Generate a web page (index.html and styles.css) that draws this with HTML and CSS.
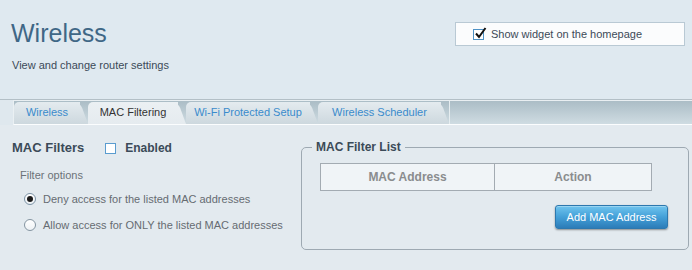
FILE: index.html
```html
<!DOCTYPE html>
<html lang="en">
  <head>
    <meta charset="UTF-8" />
    <meta name="viewport" content="width=device-width, initial-scale=1.0" />
    <title>Wireless</title>
    <link rel="stylesheet" href="styles.css">
  </head>
  <body>
    <header class="top">
      <div class="intro">
        <h1>Wireless</h1>
        <p class="subtitle">View and change router settings</p>
      </div>
      <label class="widget">
        <span class="check">
          <svg width="13" height="13" viewBox="0 0 13 13">
            <path d="M2 6.5 L5 10 L11.5 1" fill="none" stroke="#111" stroke-width="2" />
          </svg>
        </span>
        Show widget on the homepage
      </label>
    </header>

    <nav class="tab-strip">
      <div class="tab-bar">
        <a class="tab tab-wireless">Wireless</a>
        <a class="tab tab-mac active">MAC Filtering</a>
        <a class="tab tab-wps">Wi-Fi Protected Setup</a>
        <a class="tab tab-schedule">Wireless Scheduler</a>
        <span class="tab-end"></span>
      </div>
    </nav>

    <main class="content">
      <section class="filters">
        <div class="filter-head">
          <h2>MAC Filters</h2>
          <span class="box"></span>
          <span class="enabled">Enabled</span>
        </div>
        <div class="options-title">Filter options</div>
        <div class="options">
          <div class="radio-row">
            <span class="radio on"></span>
            Deny access for the listed MAC addresses
          </div>
          <div class="radio-row">
            <span class="radio"></span>
            Allow access for ONLY the listed MAC addresses
          </div>
        </div>
      </section>

      <fieldset class="filter-list">
        <legend>MAC Filter List</legend>
        <table class="mac-table">
          <tr>
            <th class="col-mac">MAC Address</th>
            <th>Action</th>
          </tr>
        </table>
        <div class="actions">
          <button class="add-button">Add MAC Address</button>
        </div>
      </fieldset>
    </main>
  </body>
</html>
```

FILE: styles.css
```css
body {
  margin: 0;
  font-family: "Liberation Sans", Arial, sans-serif;
  background-color: #e3eaef;
  color: #3b4a58;
}
.top {
  display: flex;
  justify-content: space-between;
  align-items: flex-start;
  height: 99px;
  box-sizing: border-box;
  padding: 18px 7px 0 11px;
  background-color: #dfe9f0;
}
h1 {
  margin: 0;
  font-size: 25px;
  line-height: 30px;
  font-weight: normal;
  color: #3f6786;
}
.subtitle {
  margin: 11px 0 0 1px;
  font-size: 11px;
  line-height: 13px;
  color: #3b4a58;
}
.widget {
  display: flex;
  align-items: center;
  width: 230px;
  height: 24px;
  box-sizing: border-box;
  margin-top: 4px;
  padding-left: 17px;
  border: 1px solid #b9c9d4;
  background-color: #fbfcfd;
  font-size: 11px;
  color: #3b4a58;
}
.check {
  position: relative;
  width: 9px;
  height: 9px;
  margin-right: 7px;
  border: 1px solid #4e92c6;
  background-color: #fff;
}
.check svg {
  position: absolute;
  left: 0;
  top: -3px;
}
.tab-strip {
  border-top: 1px solid #b3bfc6;
  background-color: #dfe8ee;
}
.tab-bar {
  display: flex;
  margin-left: 13px;
  height: 23px;
  padding-top: 1px;
  box-sizing: border-box;
  height: 25px;
  border-top: 1px solid #e9eff2;
  border-left: 1px solid #eaf0f3;
  border-bottom: 1px solid #fbfdfe;
  background: linear-gradient(#abbdc6, #cfdce2);
}
.tab {
  position: relative;
  z-index: 0;
  height: 22px;
  margin-right: 8px;
  line-height: 20px;
  text-align: center;
  font-size: 11px;
  color: #3a8bcc;
  text-decoration: none;
  border-radius: 5px 0 0 0;
  background: linear-gradient(#e4ebef, #cdd8de);
}
.tab::after {
  content: "";
  position: absolute;
  z-index: -1;
  top: 0;
  bottom: 0;
  right: -8px;
  width: 20px;
  background: inherit;
  transform: skewX(20deg);
  transform-origin: bottom right;
  border-radius: 0 6px 0 0;
}
.tab.active {
  color: #333;
  background: linear-gradient(#ebf0f3, #e5ebef);
}
.tab-wireless {
  width: 66px;
}
.tab-mac {
  width: 90px;
}
.tab-wps {
  width: 124px;
}
.tab-schedule {
  width: 123px;
}
.tab-end {
  width: 1px;
  margin-top: -1px;
  background-color: #e6edf0;
}
.content {
  display: flex;
  align-items: flex-start;
  padding: 15px 3px 0 12px;
}
.filters {
  flex: none;
  width: 289px;
}
.filter-head {
  display: flex;
  align-items: center;
  height: 16px;
}
h2 {
  margin: 0;
  font-size: 13px;
  line-height: 16px;
  color: #3b4a58;
}
.box {
  width: 9px;
  height: 9px;
  margin: 0 9px 0 21px;
  border: 1px solid #5a9ccf;
  background-color: #fff;
}
.enabled {
  font-size: 12px;
  font-weight: bold;
}
.options-title {
  margin: 13px 0 0 8px;
  font-size: 11px;
  line-height: 13px;
  color: #6b7278;
}
.options {
  margin-top: 4px;
  padding-left: 12px;
}
.radio-row {
  display: flex;
  align-items: center;
  height: 26px;
  font-size: 11px;
  line-height: 13px;
  color: #666c72;
}
.radio {
  position: relative;
  width: 10px;
  height: 10px;
  margin-right: 7px;
  border: 1px solid #8595a1;
  border-radius: 50%;
  background: linear-gradient(#fff, #eef2f5);
}
.radio.on {
  border-color: #7c93a6;
}
.radio.on::after {
  content: "";
  position: absolute;
  top: 2px;
  left: 2px;
  width: 6px;
  height: 6px;
  border-radius: 50%;
  background-color: #1b1b1b;
}
.filter-list {
  width: 388px;
  box-sizing: border-box;
  margin: 0;
  padding: 9px 20px 20px 18px;
  border: 1px solid #9ea9b2;
  border-radius: 5px;
}
.filter-list legend {
  margin-left: -8px;
  padding: 0 4px;
  font-size: 12px;
  line-height: 14px;
  font-weight: bold;
  color: #3b4a58;
}
.mac-table {
  width: 332px;
  border-collapse: collapse;
}
.mac-table th {
  height: 26px;
  padding: 0;
  border: 1px solid #a3abb2;
  background-color: #f0f4f7;
  font-size: 12px;
  color: #8a8c8e;
}
.mac-table .col-mac {
  width: 173px;
}
.actions {
  display: flex;
  justify-content: flex-end;
  margin-top: 14px;
}
.add-button {
  width: 113px;
  height: 24px;
  padding: 0;
  border: 1px solid #2d78ae;
  border-radius: 3px;
  background: linear-gradient(#6fc4ee, #44a0d8 50%, #2c7cb8);
  color: #fff;
  font-family: "Liberation Sans", Arial, sans-serif;
  font-size: 11px;
  box-shadow: 0 1px 2px rgba(0, 0, 0, 0.4), inset 0 1px rgba(255, 255, 255, 0.3);
}
```
